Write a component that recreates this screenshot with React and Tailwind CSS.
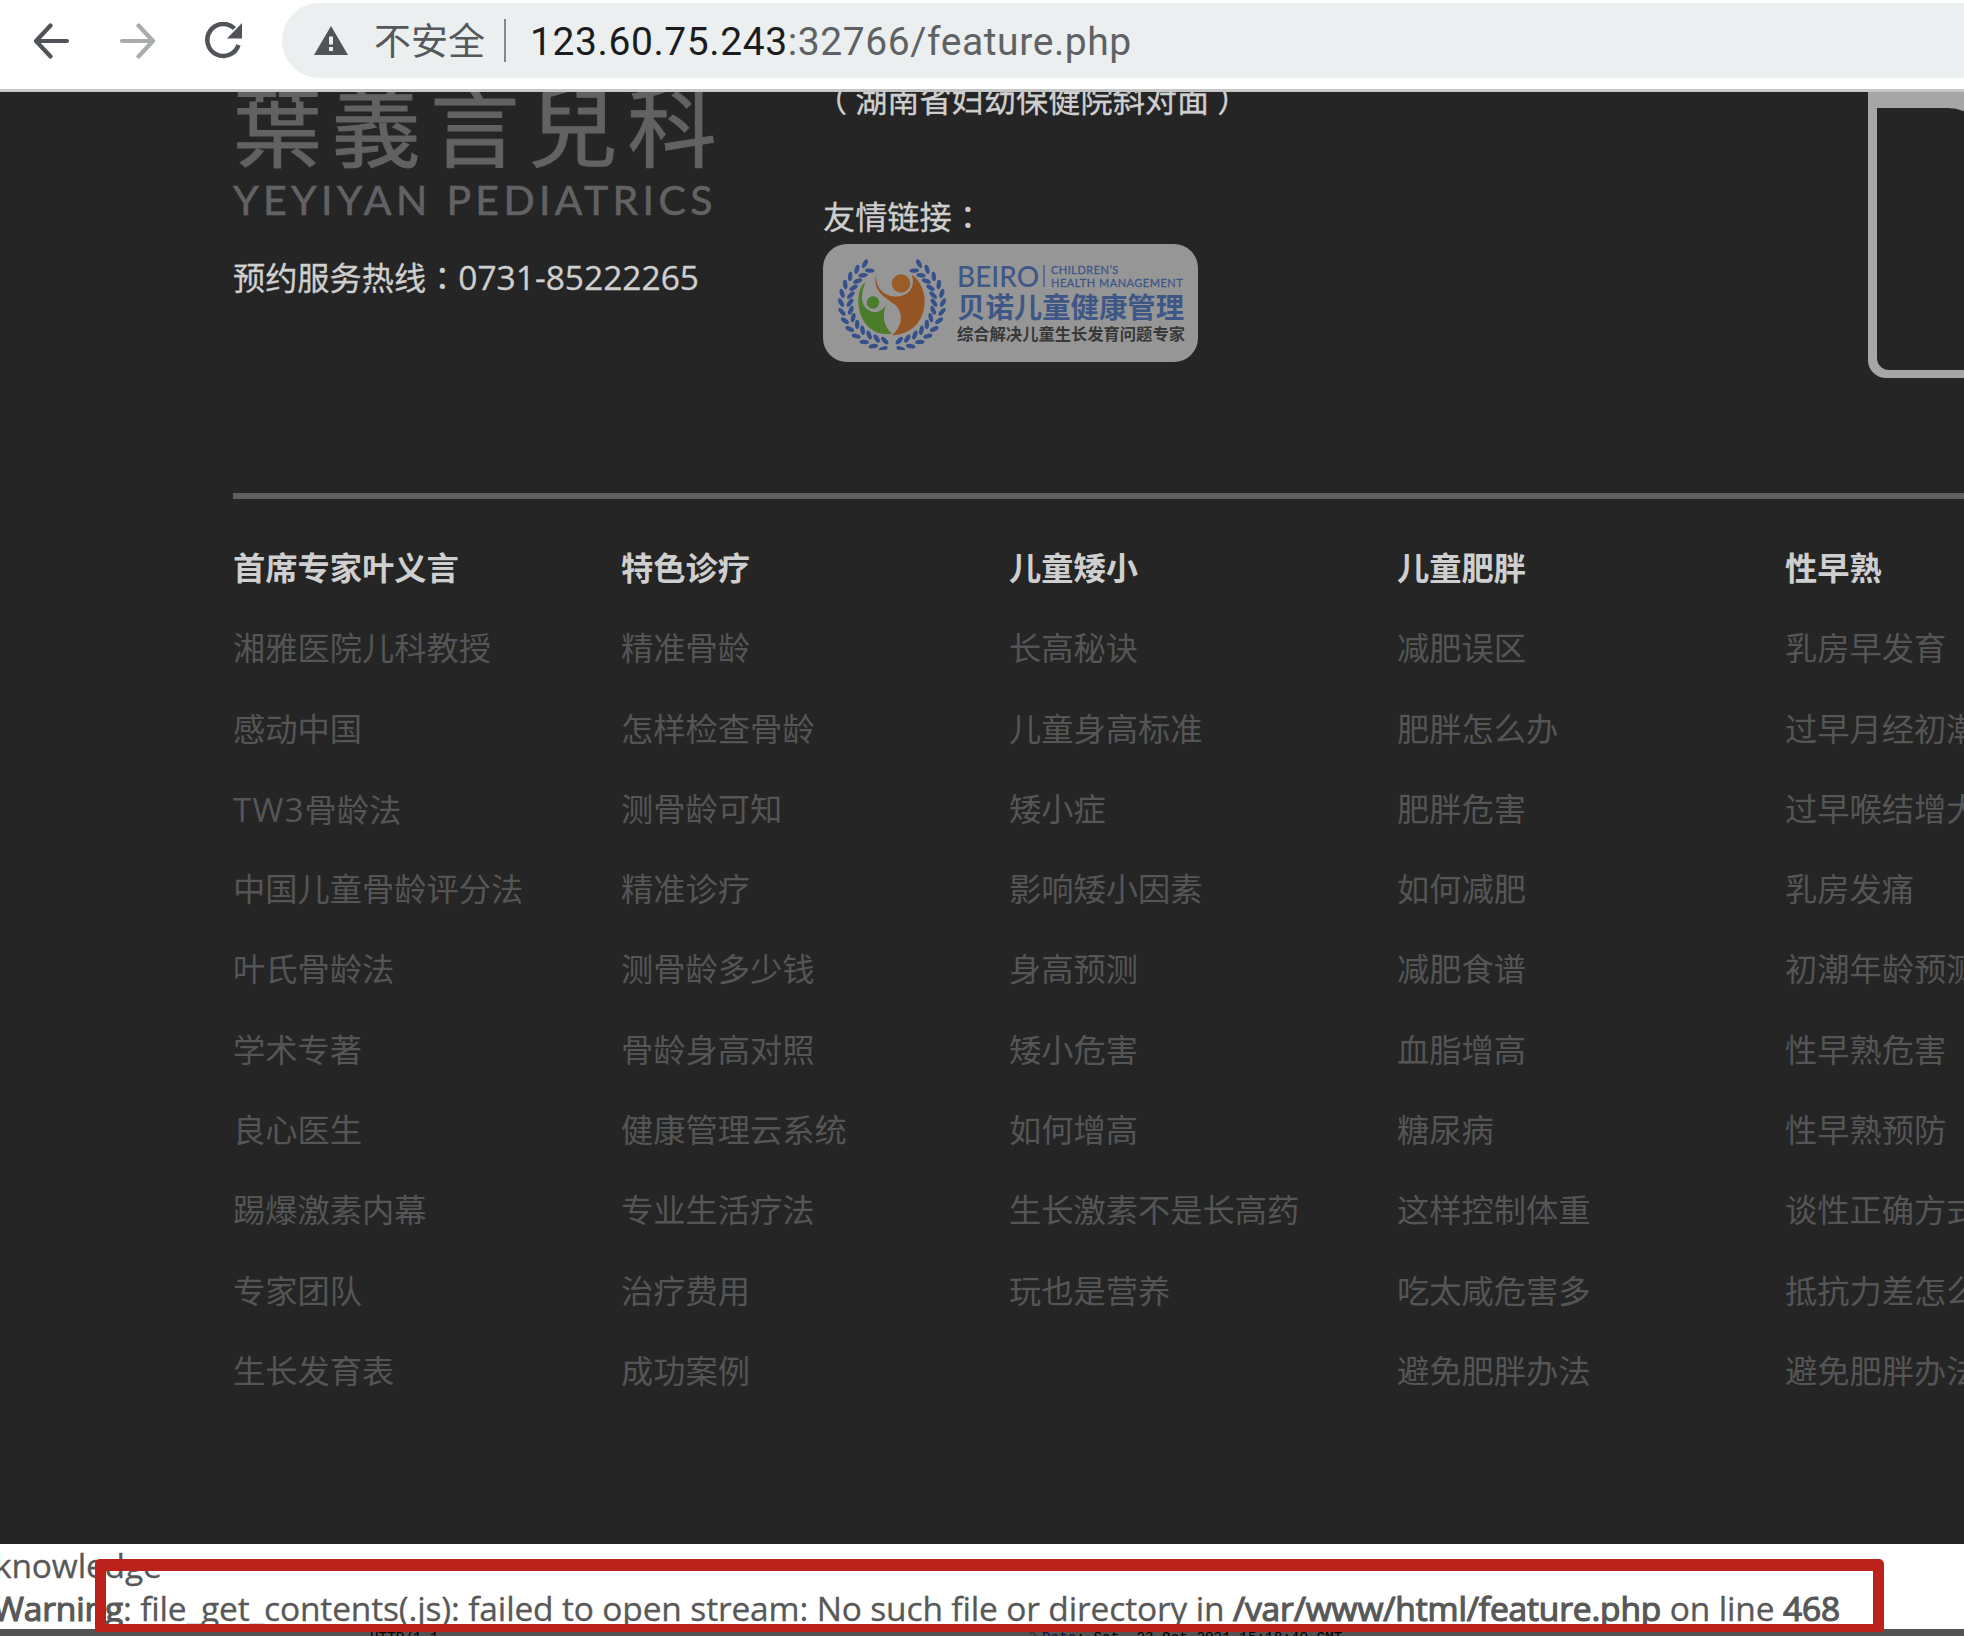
const COLS = [
  ['首席专家叶义言', ['湘雅医院儿科教授', '感动中国', 'TW3骨龄法', '中国儿童骨龄评分法', '叶氏骨龄法', '学术专著', '良心医生', '踢爆激素内幕', '专家团队', '生长发育表']],
  ['特色诊疗', ['精准骨龄', '怎样检查骨龄', '测骨龄可知', '精准诊疗', '测骨龄多少钱', '骨龄身高对照', '健康管理云系统', '专业生活疗法', '治疗费用', '成功案例']],
  ['儿童矮小', ['长高秘诀', '儿童身高标准', '矮小症', '影响矮小因素', '身高预测', '矮小危害', '如何增高', '生长激素不是长高药', '玩也是营养']],
  ['儿童肥胖', ['减肥误区', '肥胖怎么办', '肥胖危害', '如何减肥', '减肥食谱', '血脂增高', '糖尿病', '这样控制体重', '吃太咸危害多', '避免肥胖办法']],
  ['性早熟', ['乳房早发育', '过早月经初潮', '过早喉结增大', '乳房发痛', '初潮年龄预测', '性早熟危害', '性早熟预防', '谈性正确方式', '抵抗力差怎么办', '避免肥胖办法']],
];

function Toolbar() {
  return (
    <header className="flex h-[92px] shrink-0 items-start border-b-3 border-[#c8c8c8] bg-white">
      <div className="flex h-[81px] w-[282px] shrink-0 items-center">
        <svg className="ml-[33px] h-[36px] w-[37px]" viewBox="0 0 37 36" fill="none" stroke="#505357" strokeWidth="4.200" strokeLinecap="round" strokeLinejoin="round">
          <path d="M34 18H3M17.500 2.500L3 18l14.500 15.500" />
        </svg>
        <svg className="ml-[49px] h-[36px] w-[37px]" viewBox="0 0 37 36" fill="none" stroke="#a9acae" strokeWidth="4.200" strokeLinecap="round" strokeLinejoin="round">
          <path d="M3 18h31M19.500 2.500L34 18 19.500 33.500" />
        </svg>
        <svg className="ml-[48px] h-[38px] w-[40px]" viewBox="0 0 40 38">
          <path d="M30.500 6.500A16 16 0 1 0 34.500 23" fill="none" stroke="#505357" strokeWidth="4.500" />
          <path d="M38 1v15.500H23z" fill="#505357" />
        </svg>
      </div>
      <div className="mt-[3px] flex h-[75px] flex-1 items-center rounded-l-full bg-[#ebeff0] whitespace-nowrap">
        <svg className="ml-[32px] h-[29px] w-[34px]" viewBox="0 0 34 29">
          <path d="M17 0l17 29H0z" fill="#505357" />
          <path d="M15 10.500h4v8h-4zM15 21h4v4h-4z" fill="#ebeff0" />
        </svg>
        <span className="ml-[26px] text-[37px] leading-[75px] text-[#55585b]">不安全</span>
        <div className="ml-[19px] h-[43px] w-[2px] bg-[#85888b]" />
        <span className="ml-[24px] pt-[3px] font-[Roboto] text-[39px] leading-[72px] tracking-[0.590px] text-[#1b1c1e]">
          123.60.75.243<span className="text-[#5f6265]">:32766/feature.php</span>
        </span>
      </div>
    </header>
  );
}

function Wreath() {
  const leaves = [];
  for (let i = 0; i < 13; i++) {
    const a = 100 + i * 11.5;
    for (const r of [42, 51]) leaves.push([a, r]);
  }
  const half = leaves.map(([a, r], i) => {
    const t = (a * Math.PI) / 180;
    const x = 54 + r * Math.cos(t);
    const y = 46 + r * Math.sin(t) * 0.91;
    return <ellipse key={i} cx={x} cy={y} rx="4.700" ry="2.200" transform={`rotate(${a + (r < 45 ? 125 : 60)} ${x} ${y})`} />;
  });
  return (
    <svg className="h-[93px] w-[108px] shrink-0" viewBox="0 0 108 93">
      <g fill="#35508a">
        {half}
        <g transform="translate(108 0) scale(-1 1)">{half}</g>
      </g>
      <g transform="translate(0 3.500)">
        <circle cx="63" cy="23" r="9.200" fill="#9a5c28" />
        <path d="M38 13C37 26 45 36 58 36C68 36 78 30 74 14C84 22 90 37 85 52C81 66 69 74 54 75C64 66 66 54 58 45C50 38 34 33 38 13Z" fill="#955424" />
        <circle cx="35" cy="42" r="6.200" fill="#4a7c2a" />
        <path d="M28 21C24 29 23 37 25 43C29 53 42 56 49 43C43 54 46 67 54 73C40 76 27 67 23 55C19 43 19 28 28 21Z" fill="#4a7c2a" />
      </g>
    </svg>
  );
}

function PartnerCard() {
  return (
    <div className="flex h-[118px] w-[375px] items-center overflow-hidden rounded-[24px] bg-[#969696] pl-[15px] text-[#3f5787]">
      <Wreath />
      <div className="ml-[11px] flex w-[228px] flex-col whitespace-nowrap">
        <div className="flex h-[26px] items-center">
          <span className="w-[84px] font-[Lato] text-[28px] leading-[26px] font-medium">BEIRO</span>
          <div className="mr-[6px] ml-[2px] h-[22px] w-[2px] bg-[#5a6c91]" />
          <div className="flex flex-col font-[Lato] text-[11px] leading-[13px] tracking-[0.500px] [-webkit-text-stroke:0.300px_#3f5787]">
            <span>CHILDREN’S</span>
            <span>HEALTH MANAGEMENT</span>
          </div>
        </div>
        <span className="text-[28.400px] leading-[36px] font-bold">贝诺儿童健康管理</span>
        <span className="text-[16.300px] leading-[19px] font-bold text-[#383838]">综合解决儿童生长发育问题专家</span>
      </div>
    </div>
  );
}

/* Full-width punctuation centred in its em box. */
function Punct({ children }) {
  return <span className="font-['Noto_Sans_CJK_TC']" lang="zh-Hant">{children}</span>;
}

function LinkText({ text }) {
  const latin = text.match(/^[A-Z0-9]+/)?.[0] ?? '';
  return (
    <>
      {latin && <span className="text-[33.500px] tracking-[1px]">{latin}</span>}
      {text.slice(latin.length)}
    </>
  );
}

export default function App() {
  return (
    <div className="relative flex h-[1636px] w-[1964px] flex-col overflow-hidden bg-white font-['Open_Sans','Noto_Sans_CJK_SC',sans-serif]">
      <Toolbar />
      <main className="h-[1452px] shrink-0 overflow-hidden bg-[#252525] pl-[233px] text-[#cfcfcf]">
        <div className="flex h-[401px] whitespace-nowrap">
          <div className="flex w-[590px] shrink-0 flex-col">
            <div className="-mt-[14px] font-['Noto_Sans_CJK_TC'] text-[89px] leading-[88px] tracking-[9.600px] text-[#626264] [-webkit-text-stroke:1px_#626264]">葉義言兒科</div>
            <div className="mt-[13px] font-[Lato] text-[41px] leading-[42px] tracking-[4.350px] text-[#626264] [-webkit-text-stroke:0.600px_#626264]">YEYIYAN PEDIATRICS</div>
            <div className="mt-[31px] h-[48px] text-[32.200px] leading-[48px] [-webkit-text-stroke:0.300px_#cfcfcf]">预约服务热线<Punct>：</Punct><span className="text-[33.500px]">0731-85222265</span></div>
          </div>
          <div className="flex w-[1045px] shrink-0 flex-col [-webkit-text-stroke:0.300px_#cfcfcf]">
            <div className="-mt-[16px] h-[48px] text-[32.200px] leading-[48px]">
              <span className="inline-block -translate-x-[8px]">（</span>湖南省妇幼保健院斜对面<span className="inline-block translate-x-[8px]">）</span>
            </div>
            <div className="mt-[67px] mb-[5px] h-[48px] text-[32.200px] leading-[48px]">友情链接<Punct>：</Punct></div>
            <div className="[-webkit-text-stroke:0]">
              <PartnerCard />
            </div>
          </div>
          <div className="h-[286px] w-[120px] shrink-0 rounded-bl-[18px] bg-[#a6a6a6] pt-[16px] pb-[8px] pl-[9px]">
            <div className="h-full rounded-tr-[40px] rounded-bl-[12px] bg-[#252525]" />
          </div>
        </div>
        <div className="h-[6px] bg-[#5f5e63]" />
        <div className="flex pt-[29px] whitespace-nowrap">
          {COLS.map(([title, items]) => (
            <div key={title} className="w-[388px] shrink-0 text-[32.250px]">
              <h3 className="h-[80.300px] leading-[80px] font-bold">{title}</h3>
              {items.map((t) => (
                <div key={t} className="h-[80.300px] leading-[80px] text-[#555555]"><LinkText text={t} /></div>
              ))}
            </div>
          ))}
        </div>
      </main>
      <footer className="flex h-[85px] shrink-0 flex-col text-[33.500px] leading-[43px] tracking-[-0.150px] whitespace-nowrap text-[#585858] [-webkit-text-stroke:0.300px_#585858]">
        <div className="-ml-[6px]">knowledge</div>
        <div className="-ml-[7px]">
          <span className="[-webkit-text-stroke:1.200px_#585858]">Warning</span>: file_get_contents(.js): failed to open stream: No such file or directory in <span className="[-webkit-text-stroke:1.200px_#585858]">/var/www/html/feature.php</span> on line <span className="[-webkit-text-stroke:1.200px_#585858]">468</span>
        </div>
      </footer>
      <div className="flex h-[7px] shrink-0 overflow-hidden bg-[#535353] pt-[2px] font-['Liberation_Mono'] text-[14.300px] leading-[14px] whitespace-pre text-black">
        <span className="ml-[370px] w-[658px]">HTTP/1.1</span>
        <span className="w-[14px] text-[#333]">2</span>
        <span><span className="text-[#10104a]">Date</span>: Sat, 23 Oct 2021 15:18:40 GMT</span>
      </div>
      <div className="absolute top-[1559px] left-[95px] h-[73px] w-[1789px] rounded-t-[5px] border-x-[11px] border-t-[12px] border-b-[8px] border-[#bb221b]" />
    </div>
  );
}
